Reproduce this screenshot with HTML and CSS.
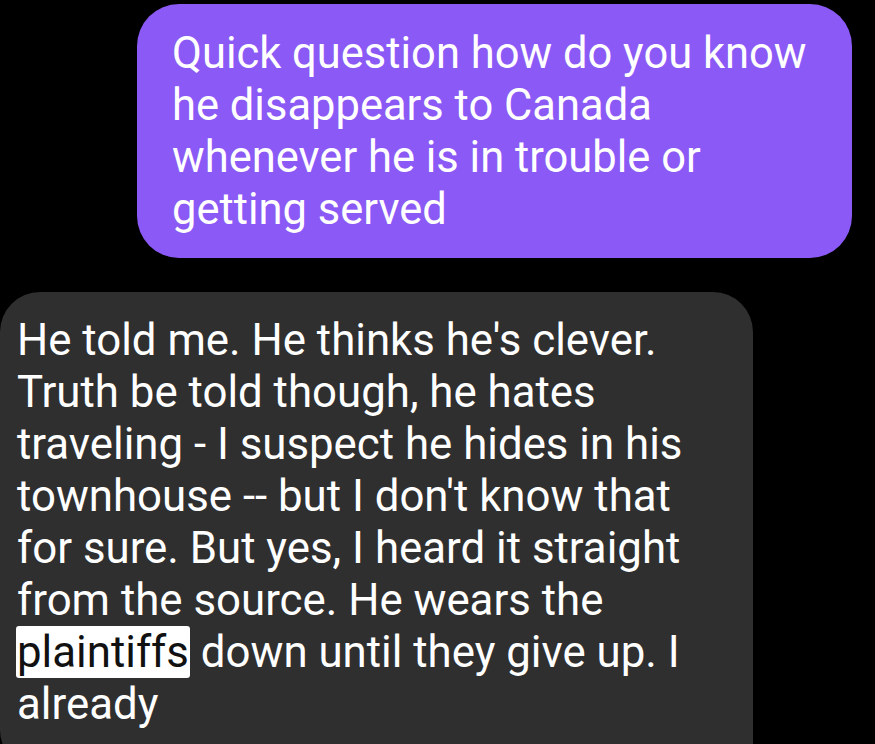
FILE: index.html
```html
<!DOCTYPE html>
<html lang="en">
<head>
<meta charset="utf-8">
<title>Chat</title>
<link rel="stylesheet" href="styles.css">
</head>
<body>
<main class="thread">
  <div class="bubble sent">Quick question how do you know<br>he disappears to Canada<br>whenever he is in trouble or<br>getting served</div>
  <div class="bubble received">He told me. He thinks he's clever.<br>Truth be told though, he hates<br>traveling - I suspect he hides in his<br>townhouse -- but I don't know that<br>for sure. But yes, I heard it straight<br>from the source. He wears the<br><span class="hl">plaintiffs</span> down until they give up. I<br>already</div>
</main>
</body>
</html>
```
FILE: styles.css
```css
html, body {
  margin: 0;
  padding: 0;
  background: #000;
  height: 100%;
  overflow: hidden;
}
.thread {
  display: flex;
  flex-direction: column;
  padding-top: 4px;
  gap: 34px;
  font-family: Roboto, "Noto Sans", sans-serif;
  font-size: 43.5px;
  line-height: 52px;
  color: #fff;
}
.bubble {
  box-sizing: border-box;
  white-space: nowrap;
}
.sent {
  align-self: flex-end;
  margin-right: 23px;
  width: 715px;
  background: #8b59f5;
  border-radius: 42px;
  padding: 24px 20px 22px 35px;
}
.received {
  align-self: flex-start;
  width: 753px;
  background: #2f2f2f;
  border-radius: 40px 40px 0 40px;
  padding: 22px 20px 40px 17px;
  font-size: 43.8px;
}
.hl {
  background: #fff;
  color: #111;
  border-radius: 3px;
  padding: 0 1px;
  margin-left: -1px;
}
```
